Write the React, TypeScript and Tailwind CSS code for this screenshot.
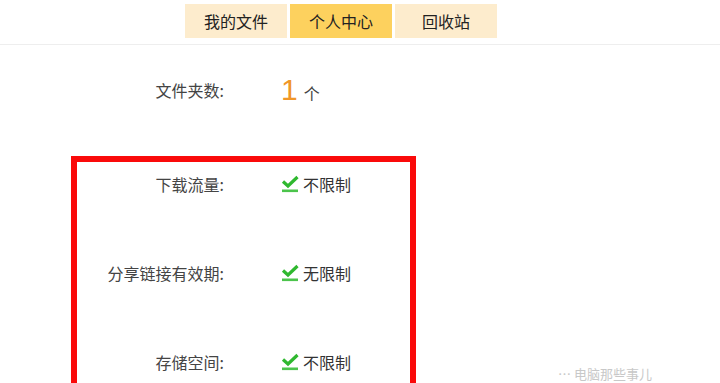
const font = { fontFamily: '"Noto Sans CJK SC", "Microsoft YaHei", sans-serif' };

const CheckIcon = () => (
  <svg width="18" height="18" viewBox="0 0 18 18" className="shrink-0">
    <path d="M2 6.5 L7 11 L16.5 2" fill="none" stroke="#2fb82f" strokeWidth="3.2" strokeLinejoin="miter" />
    <rect x="1" y="14.5" width="16" height="2.6" fill="#4cc44c" />
  </svg>
);

const tabs = [
  { name: "我的文件", active: false },
  { name: "个人中心", active: true },
  { name: "回收站", active: false },
];

const rows = [
  { label: "下载流量:", value: "不限制" },
  { label: "分享链接有效期:", value: "无限制" },
  { label: "存储空间:", value: "不限制" },
];

export default function App() {
  return (
    <div className="w-[720px] h-[383px] overflow-hidden bg-white relative text-[#333]" style={font}>
      <div className="h-[45px] border-b border-[#eeeeee] flex items-start pt-[4px] pl-[185px] gap-[3px]">
        {tabs.map((t) => (
          <div
            key={t.name}
            className={`w-[102px] h-[34px] flex items-center justify-center text-[16px] text-[#222] ${
              t.active ? "bg-[#fdd15e]" : "bg-[#fdeccd]"
            }`}
          >
            {t.name}
          </div>
        ))}
      </div>

      <div className="flex items-center h-[30px] mt-[30px]">
        <div className="w-[224px] text-right text-[16px] text-[#444]">文件夹数:</div>
        <div className="ml-[57px] flex items-baseline">
          <span className="text-[30px] leading-none text-[#f09628]" style={{ fontFamily: '"Liberation Sans", sans-serif' }}>1</span>
          <span className="ml-[6px] text-[16px] text-[#444]">个</span>
        </div>
      </div>

      <div className="ml-[71px] mt-[51px] w-[345px] h-[260px] border-[6px] border-b-0 border-[#fa0a0a]">
        <div className="flex flex-col gap-[59px] pt-[7px]">
          {rows.map((r) => (
            <div key={r.label} className="flex items-center h-[30px]">
              <div className="w-[147px] text-right text-[16px] text-[#444]">{r.label}</div>
              <div className="ml-[57px] flex items-center gap-[4px]">
                <CheckIcon />
                <span className="text-[16px] text-[#333]">{r.value}</span>
              </div>
            </div>
          ))}
        </div>
      </div>

      <div className="absolute left-[558px] top-[364px] text-[13px] text-[#c8c8c8] whitespace-nowrap">
        ⋯ 电脑那些事儿
      </div>
    </div>
  );
}
